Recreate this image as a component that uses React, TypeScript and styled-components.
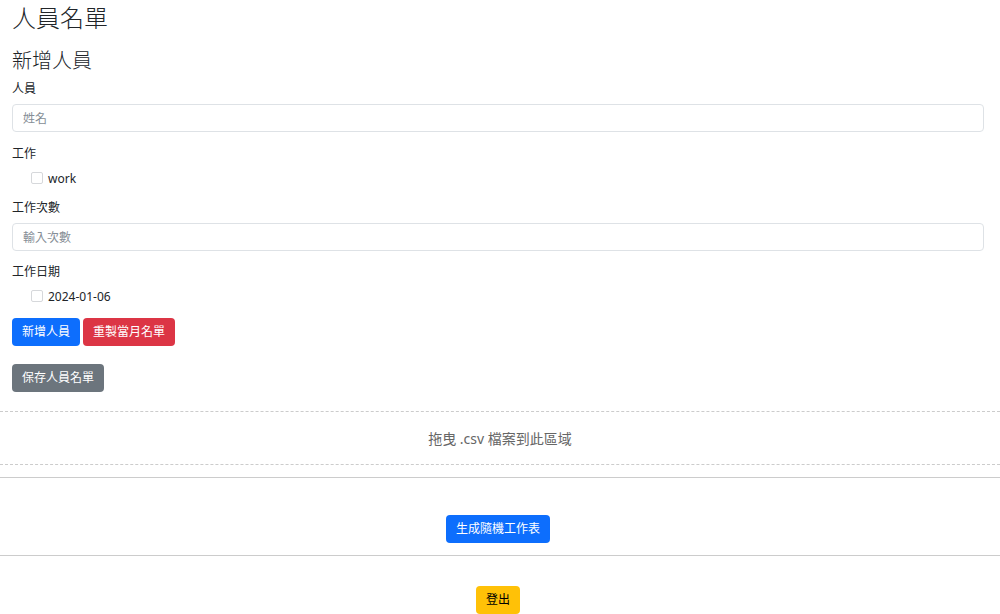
import React from "react";
import styled, { createGlobalStyle } from "styled-components";

const GlobalStyle = createGlobalStyle`
  body {
    margin: 0;
    background: #ffffff;
    color: #212529;
    font-family: "Segoe UI", "Noto Sans", "Noto Sans CJK TC", sans-serif;
  }
`;

const Page = styled.div`
  width: 1000px;
`;

const Section = styled.div`
  padding: 0 16px 0 12px;
`;

const Title = styled.h1`
  margin: 3px 0 0;
  font-size: 24px;
  font-weight: 300;
  line-height: 29px;
`;

const SubTitle = styled.h2`
  margin: 17px 0 0;
  font-size: 20px;
  font-weight: 300;
  line-height: 24px;
`;

const FormGroup = styled.div<{ $top?: number }>`
  margin-top: ${(p) => p.$top ?? 12}px;
`;

const Label = styled.div`
  font-size: 12px;
  line-height: 18px;
  margin-bottom: 6px;
`;

const Input = styled.input`
  display: block;
  box-sizing: border-box;
  width: 100%;
  height: 28px;
  padding: 0 10px;
  border: 1px solid #dee2e6;
  border-radius: 4px;
  font-family: inherit;
  font-size: 12px;
  color: #212529;
  outline: none;

  &::placeholder {
    color: #868e96;
  }
`;

const CheckRow = styled.label`
  display: flex;
  align-items: center;
  gap: 5px;
  height: 18px;
  padding-left: 19px;
  font-size: 12px;
`;

const CheckBox = styled.span`
  width: 10px;
  height: 10px;
  border: 1px solid #d6d8db;
  border-radius: 2px;
  background: #fff;
`;

const ButtonRow = styled.div<{ $top: number; $center?: boolean }>`
  display: flex;
  gap: 3px;
  margin-top: ${(p) => p.$top}px;
  justify-content: ${(p) => (p.$center ? "center" : "flex-start")};
  padding-right: ${(p) => (p.$center ? 4 : 0)}px;
`;

const palette = {
  primary: { bg: "#0d6efd", fg: "#ffffff" },
  danger: { bg: "#dc3545", fg: "#ffffff" },
  secondary: { bg: "#6c757d", fg: "#ffffff" },
  warning: { bg: "#ffc107", fg: "#000000" },
};

const Button = styled.button<{ $variant: keyof typeof palette }>`
  height: 28px;
  padding: 0 10px;
  border: none;
  border-radius: 4px;
  font-family: inherit;
  font-size: 12px;
  line-height: 28px;
  cursor: pointer;
  background: ${(p) => palette[p.$variant].bg};
  color: ${(p) => palette[p.$variant].fg};
`;

const DropZone = styled.div`
  margin-top: 19px;
  height: 52px;
  border-top: 1px dashed #cccccc;
  border-bottom: 1px dashed #cccccc;
  display: flex;
  align-items: center;
  justify-content: center;
  font-size: 14px;
  color: #666666;
`;

const Rule = styled.hr<{ $top: number }>`
  margin: ${(p) => p.$top}px 0 0;
  border: none;
  border-top: 1px solid #cccccc;
`;

export default function App() {
  return (
    <Page>
      <GlobalStyle />
      <Section>
        <Title>人員名單</Title>
        <SubTitle>新增人員</SubTitle>

        <FormGroup $top={7}>
          <Label>人員</Label>
          <Input placeholder="姓名" />
        </FormGroup>

        <FormGroup $top={13}>
          <Label>工作</Label>
          <CheckRow>
            <CheckBox />
            work
          </CheckRow>
        </FormGroup>

        <FormGroup $top={12}>
          <Label>工作次數</Label>
          <Input placeholder="輸入次數" />
        </FormGroup>

        <FormGroup $top={12}>
          <Label>工作日期</Label>
          <CheckRow>
            <CheckBox />
            2024-01-06
          </CheckRow>
        </FormGroup>

        <ButtonRow $top={13}>
          <Button $variant="primary">新增人員</Button>
          <Button $variant="danger">重製當月名單</Button>
        </ButtonRow>

        <ButtonRow $top={18}>
          <Button $variant="secondary">保存人員名單</Button>
        </ButtonRow>
      </Section>

      <DropZone>拖曳 .csv 檔案到此區域</DropZone>

      <Rule $top={12} />
      <ButtonRow $top={37} $center>
        <Button $variant="primary">生成隨機工作表</Button>
      </ButtonRow>
      <Rule $top={12} />
      <ButtonRow $top={30} $center>
        <Button $variant="warning">登出</Button>
      </ButtonRow>
    </Page>
  );
}
